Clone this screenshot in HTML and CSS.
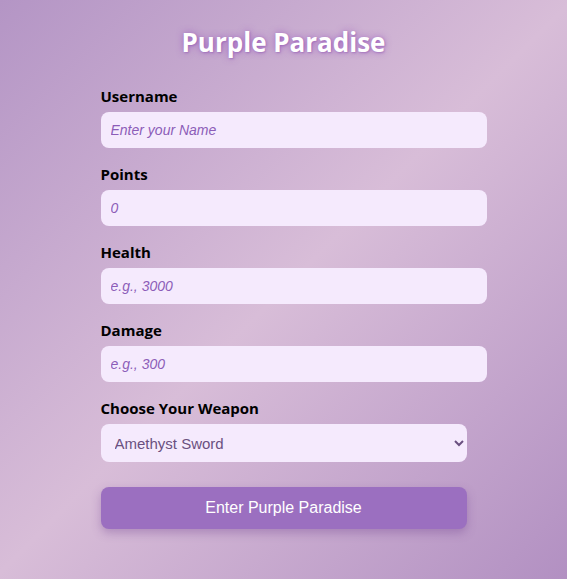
FILE: index.html
```html
<!DOCTYPE html>
<html lang="en">
<head>
<meta charset="utf-8">
<title>Purple Paradise</title>
<link rel="stylesheet" href="styles.css">
</head>
<body>
<main class="page">
  <h1 class="title">Purple Paradise</h1>
  <form class="form">
    <label class="label" for="username">Username</label>
    <input class="field" id="username" type="text" placeholder="Enter your Name">
    <label class="label" for="points">Points</label>
    <input class="field" id="points" type="text" placeholder="0">
    <label class="label" for="health">Health</label>
    <input class="field" id="health" type="text" placeholder="e.g., 3000">
    <label class="label" for="damage">Damage</label>
    <input class="field" id="damage" type="text" placeholder="e.g., 300">
    <label class="label" for="weapon">Choose Your Weapon</label>
    <select class="select" id="weapon">
      <option>Amethyst Sword</option>
      <option>Violet Bow</option>
      <option>Lilac Staff</option>
    </select>
    <button class="button" type="button">Enter Purple Paradise</button>
  </form>
</main>
</body>
</html>
```
FILE: styles.css
```css
html, body {
  margin: 0;
  padding: 0;
}
body {
  min-height: 579px;
  background: linear-gradient(135deg, #b495c5 0%, #d8bdd8 50%, #b290c2 100%);
  font-family: "Open Sans", "Segoe UI", sans-serif;
}
.page {
  width: 366px;
  margin: 0 auto;
  padding-top: 24px;
}
.title {
  margin: 0 0 26px;
  text-align: center;
  color: #ffffff;
  font-size: 26px;
  font-weight: 700;
  line-height: 36px;
  text-shadow: 0 0 7px rgba(150, 80, 190, 0.75), 1px 1px 2px rgba(120, 60, 160, 0.4);
}
.form {
  display: flex;
  flex-direction: column;
  align-items: flex-start;
}
.label {
  display: block;
  font-size: 15px;
  font-weight: 700;
  line-height: 20px;
  color: #000;
  margin-bottom: 6px;
}
.field {
  box-sizing: content-box;
  width: 100%;
  height: 16px;
  padding: 10px;
  margin: 0 0 16px;
  border: none;
  border-radius: 8px;
  background: #f5eafd;
  font-family: "Liberation Sans", Arial, sans-serif;
  font-size: 14px;
  color: #5a3a78;
  outline: none;
}
.field::placeholder {
  color: #8c5db8;
  font-style: italic;
  opacity: 1;
}
.select {
  box-sizing: border-box;
  width: 100%;
  height: 38px;
  padding: 0 6px 0 10px;
  margin: 0 0 25px;
  border: none;
  border-radius: 8px;
  background-color: #f5eafd;
  font-family: "Liberation Sans", Arial, sans-serif;
  font-size: 15px;
  color: #6a5080;
}
.button {
  width: 100%;
  height: 42px;
  border: none;
  border-radius: 8px;
  background: #9b6fc0;
  color: #ffffff;
  font-family: "Liberation Sans", Arial, sans-serif;
  font-size: 16px;
  box-shadow: 0 4px 10px rgba(110, 60, 140, 0.35);
  cursor: pointer;
}
```
